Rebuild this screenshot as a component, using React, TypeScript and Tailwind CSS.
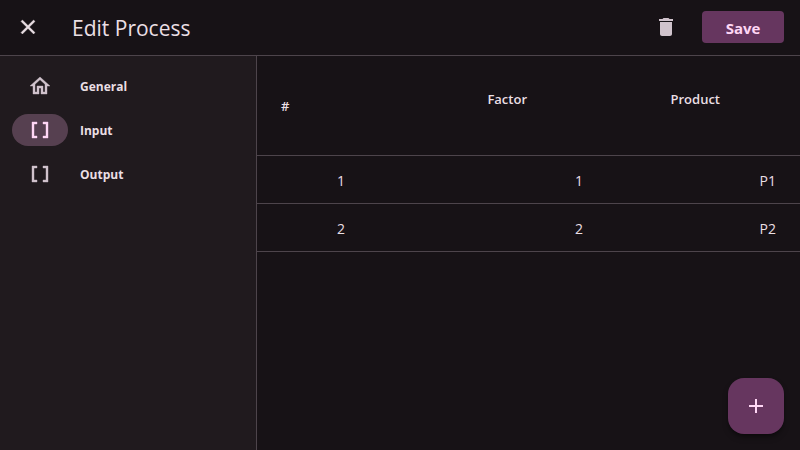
import type { ReactNode } from "react";

type IconProps = { path: string; heavy?: boolean };

function Icon({ path, heavy = false }: IconProps) {
  return (
    <svg viewBox="0 0 24 24" className="size-6 shrink-0 fill-current" aria-hidden="true">
      <path d={path} stroke="currentColor" strokeWidth={heavy ? 0.4 : 0} />
    </svg>
  );
}

const icons = {
  close: "M19 6.41L17.59 5 12 10.59 6.41 5 5 6.41 10.59 12 5 17.59 6.41 19 12 13.41 17.59 19 19 17.59 13.41 12z",
  trash: "M6 19c0 1.1.9 2 2 2h8c1.1 0 2-.9 2-2V7H6v12zM19 4h-3.5l-1-1h-5l-1 1H5v2h14V4z",
  home: "M12 5.69l5 4.5V18h-2v-6H9v6H7v-7.81l5-4.5M12 3L2 12h3v8h6v-6h2v6h6v-8h3L12 3z",
  brackets: "M15 4v2h3v12h-3v2h5V4zM4 20h5v-2H6V6h3V4H4z",
  add: "M19 13h-6v6h-2v-6H5v-2h6V5h2v6h6v2z",
};

type NavItemProps = { icon: string; active?: boolean; children: ReactNode };

function NavItem({ icon, active = false, children }: NavItemProps) {
  return (
    <li>
      <a
        href="#"
        aria-current={active ? "page" : undefined}
        className={active ? "flex items-center gap-3 text-[#ffd7f5]" : "flex items-center gap-3 text-[#d0c3cc]"}
      >
        <span
          className={
            active
              ? "flex h-8 w-14 items-center justify-center rounded-full bg-[#564050]"
              : "flex h-8 w-14 items-center justify-center rounded-full"
          }
        >
          <Icon path={icon} heavy />
        </span>
        <span className="pt-0.5 text-xs font-bold text-[#eadfe4]">{children}</span>
      </a>
    </li>
  );
}

const rows = [
  { id: 1, factor: 1, product: "P1" },
  { id: 2, factor: 2, product: "P2" },
];

export default function App() {
  return (
    <div className="flex min-h-screen flex-col bg-[#171216] font-['Open_Sans','Noto_Sans',sans-serif] text-[#eadfe4]">
      <header className="flex h-14 items-center border-b border-[#4d444b] px-4 pb-px">
        <button type="button" aria-label="Close">
          <Icon path={icons.close} heavy />
        </button>
        <h1 className="ml-8 grow pt-1 text-[21px]">Edit Process</h1>
        <button type="button" aria-label="Delete" className="text-[#d0c3cc]">
          <Icon path={icons.trash} />
        </button>
        <button
          type="button"
          className="ml-6 h-8 w-[82px] rounded bg-[#66365f] pt-0.5 text-[15px] font-bold text-[#ffd7f5]"
        >
          Save
        </button>
      </header>

      <div className="flex grow">
        <nav className="w-[257px] shrink-0 border-r border-[#4d444b] bg-[#201a1e] px-3 py-[14px]">
          <ul className="flex flex-col gap-3">
            <NavItem icon={icons.home}>General</NavItem>
            <NavItem icon={icons.brackets} active>Input</NavItem>
            <NavItem icon={icons.brackets}>Output</NavItem>
          </ul>
        </nav>

        <main className="min-w-0 grow">
          <table className="w-full table-fixed text-right text-sm">
            <colgroup>
              <col className="w-28" />
              <col className="w-[238px]" />
              <col />
            </colgroup>
            <thead>
              <tr className="h-[99px] border-b border-[#4d444b] text-[13px]">
                <th scope="col" className="px-6 pt-0.5 text-left font-semibold">#</th>
                <th scope="col" className="pr-20 pb-3 font-semibold">Factor</th>
                <th scope="col" className="pr-20 pb-3 font-semibold">Product</th>
              </tr>
            </thead>
            <tbody>
              {rows.map((row) => (
                <tr key={row.id} className="h-12 border-b border-[#4d444b]">
                  <td className="px-6 pt-1">{row.id}</td>
                  <td className="px-6 pt-1">{row.factor}</td>
                  <td className="px-6 pt-1">{row.product}</td>
                </tr>
              ))}
            </tbody>
          </table>
        </main>
      </div>

      <button
        type="button"
        aria-label="Add"
        className="fixed right-4 bottom-4 flex size-14 items-center justify-center rounded-2xl bg-[#66365f] text-[#ffd7f5] shadow-md shadow-black/40"
      >
        <Icon path={icons.add} />
      </button>
    </div>
  );
}
